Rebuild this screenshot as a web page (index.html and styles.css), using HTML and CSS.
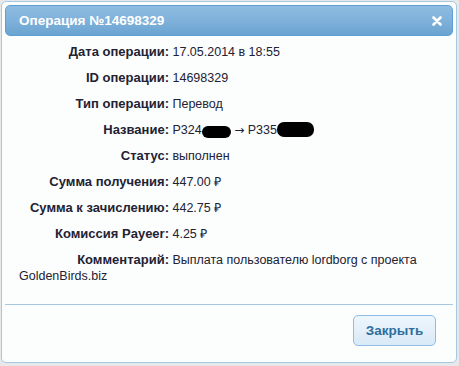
FILE: index.html
```html
<!DOCTYPE html>
<html lang="ru">
<head>
    <meta charset="UTF-8">
    <title>Операция №14698329</title>
    <link rel="stylesheet" href="styles.css">
</head>
<body>
    <div class="dialog">
        <div class="dialog-title">
            <span>Операция №14698329</span>
            <svg class="close" width="10" height="10" viewBox="0 0 10 10">
                <path d="M1.5 1.5 L8.5 8.5 M8.5 1.5 L1.5 8.5" stroke="#fff" stroke-width="2.6" stroke-linecap="round"/>
            </svg>
        </div>

        <div class="dialog-content">
            <div class="row"><span class="label">Дата операции:</span> 17.05.2014 в 18:55</div>
            <div class="row"><span class="label">ID операции:</span> 14698329</div>
            <div class="row"><span class="label">Тип операции:</span> Перевод</div>
            <div class="row"><span class="label">Название:</span> P324<span class="blot blot-a"></span> <span class="arrow">→</span> P335<span class="blot blot-b"></span></div>
            <div class="row"><span class="label">Статус:</span> выполнен</div>
            <div class="row"><span class="label">Сумма получения:</span> 447.00 &#8381;</div>
            <div class="row"><span class="label">Сумма к зачислению:</span> 442.75 &#8381;</div>
            <div class="row"><span class="label">Комиссия Payeer:</span> 4.25 &#8381;</div>
            <div class="row"><span class="label">Комментарий:</span> Выплата пользователю lordborg с проекта GoldenBirds.biz</div>
        </div>

        <div class="dialog-buttons">
            <button class="btn">Закрыть</button>
        </div>
    </div>
</body>
</html>
```

FILE: styles.css
```css
:root {
    --border: #a6c9e2;
    --text: #222233;
    --link: #2e6e9e;
}
body {
    margin: 0;
    padding: 1px;
    background: #e6e8ea;
    font-family: 'Liberation Sans', Arial, sans-serif;
}
.dialog {
    width: 456px;
    height: 362px;
    box-sizing: border-box;
    padding: 3px;
    background: #fcfdfd;
    border: 1px solid var(--border);
    border-radius: 5px;
    display: flex;
    flex-direction: column;
}
.dialog-title {
    height: 31px;
    box-sizing: border-box;
    display: flex;
    align-items: center;
    justify-content: space-between;
    padding: 0 10px 0 13px;
    background: linear-gradient(#8fbde1, #7fb1da 50%, #6aa4d1);
    border: 1px solid #5e9fd6;
    border-radius: 5px;
    color: #fff;
    font-weight: bold;
    font-size: 13.5px;
}
.close {
    margin-top: 1px;
}
.dialog-content {
    flex: 1;
    padding: 8px 10px 0 14px;
    font-size: 12.5px;
    color: var(--text);
}
.row {
    line-height: 16px;
    margin-bottom: 10px;
}
.label {
    display: inline-block;
    width: 150px;
    text-align: right;
    font-weight: bold;
    font-size: 13px;
}
.arrow {
    font-family: 'DejaVu Sans', sans-serif;
    font-size: 12px;
}
.blot {
    display: inline-block;
    height: 12px;
    margin: -3px 0;
    background: #000;
    border-radius: 7px;
    vertical-align: -1px;
}
.blot-a {
    width: 29px;
}
.blot-b {
    width: 37px;
    height: 15px;
    vertical-align: 0;
}
.dialog-buttons {
    border-top: 1px solid var(--border);
    display: flex;
    justify-content: flex-end;
    padding: 10px 17px 13px 0;
}
.btn {
    width: 83px;
    height: 31px;
    background: linear-gradient(#eef6fd, #d9e9f7);
    border: 1px solid #8ebde6;
    border-radius: 5px;
    color: var(--link);
    font-family: inherit;
    font-weight: bold;
    font-size: 13.5px;
    cursor: pointer;
}
```
